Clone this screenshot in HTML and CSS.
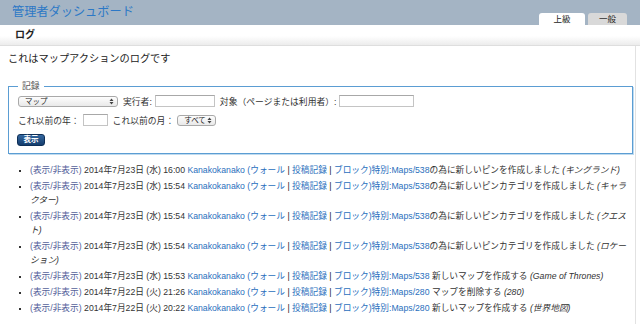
FILE: index.html
```html
<!DOCTYPE html>
<html lang="ja">
<head>
    <meta charset="UTF-8">
    <meta name="viewport" content="width=device-width, initial-scale=1.0">
    <title>管理者ダッシュボード</title>
    <link rel="stylesheet" href="styles.css">
</head>
<body>
    <header class="top-bar">
        <h1 class="site-title">管理者ダッシュボード</h1>
        <div class="tabs">
            <span class="tab active">上級</span>
            <span class="tab">一般</span>
        </div>
    </header>
    <nav class="sub-bar">ログ</nav>

    <main class="content">
        <p class="intro">これはマップアクションのログです</p>

        <fieldset class="log-form">
            <legend>記録</legend>
            <div class="form-row">
                <span class="select-wrap wide">
                    <select>
                        <option>マップ</option>
                    </select>
                    <svg class="arrows" width="5" height="7" viewBox="0 0 5 7"><path d="M0.5 3 L2.5 0.5 L4.5 3 Z M0.5 4 L2.5 6.5 L4.5 4 Z" fill="#444"/></svg>
                </span>
                <label>実行者:</label>
                <input type="text" class="performer">
                <label>対象（ページまたは利用者）:</label>
                <input type="text" class="target">
            </div>
            <div class="form-row">
                <label>これ以前の年：</label>
                <input type="text" class="year">
                <label class="month-label">これ以前の月：</label>
                <span class="select-wrap narrow">
                    <select>
                        <option>すべて</option>
                    </select>
                    <svg class="arrows" width="5" height="7" viewBox="0 0 5 7"><path d="M0.5 3 L2.5 0.5 L4.5 3 Z M0.5 4 L2.5 6.5 L4.5 4 Z" fill="#444"/></svg>
                </span>
            </div>
            <button class="show-btn">表示</button>
        </fieldset>

        <ul class="log-list">
            <li><a class="toggle">(表示/非表示)</a> 2014年7月23日 (水) 16:00 <a>Kanakokanako</a> <a>(ウォール</a> <span class="sep">|</span> <a>投稿記録</a> <span class="sep">|</span> <a>ブロック)</a><a>特別:Maps/538</a>の為に新しいピンを作成しました <em>(キングランド)</em></li>
            <li><a class="toggle">(表示/非表示)</a> 2014年7月23日 (水) 15:54 <a>Kanakokanako</a> <a>(ウォール</a> <span class="sep">|</span> <a>投稿記録</a> <span class="sep">|</span> <a>ブロック)</a><a>特別:Maps/538</a>の為に新しいピンカテゴリを作成しました <em>(キャラクター)</em></li>
            <li><a class="toggle">(表示/非表示)</a> 2014年7月23日 (水) 15:54 <a>Kanakokanako</a> <a>(ウォール</a> <span class="sep">|</span> <a>投稿記録</a> <span class="sep">|</span> <a>ブロック)</a><a>特別:Maps/538</a>の為に新しいピンカテゴリを作成しました <em>(クエスト)</em></li>
            <li><a class="toggle">(表示/非表示)</a> 2014年7月23日 (水) 15:54 <a>Kanakokanako</a> <a>(ウォール</a> <span class="sep">|</span> <a>投稿記録</a> <span class="sep">|</span> <a>ブロック)</a><a>特別:Maps/538</a>の為に新しいピンカテゴリを作成しました <em>(ロケーション)</em></li>
            <li><a class="toggle">(表示/非表示)</a> 2014年7月23日 (水) 15:53 <a>Kanakokanako</a> <a>(ウォール</a> <span class="sep">|</span> <a>投稿記録</a> <span class="sep">|</span> <a>ブロック)</a><a>特別:Maps/538</a> 新しいマップを作成する <em>(Game of Thrones)</em></li>
            <li><a class="toggle">(表示/非表示)</a> 2014年7月22日 (火) 21:26 <a>Kanakokanako</a> <a>(ウォール</a> <span class="sep">|</span> <a>投稿記録</a> <span class="sep">|</span> <a>ブロック)</a><a>特別:Maps/280</a> マップを削除する <em>(280)</em></li>
            <li><a class="toggle">(表示/非表示)</a> 2014年7月22日 (火) 20:22 <a>Kanakokanako</a> <a>(ウォール</a> <span class="sep">|</span> <a>投稿記録</a> <span class="sep">|</span> <a>ブロック)</a><a>特別:Maps/280</a> 新しいマップを作成する <em>(世界地図)</em></li>
        </ul>
    </main>
</body>
</html>
```

FILE: styles.css
```css
* {
    margin: 0;
    padding: 0;
    box-sizing: border-box;
    font-family: 'Liberation Sans', 'Noto Sans CJK JP', sans-serif;
}

body {
    background: white;
    color: #333;
}

.top-bar {
    height: 25px;
    background: #a4b4c4;
    display: flex;
    justify-content: space-between;
}

.site-title {
    font-size: 12.2px;
    font-weight: normal;
    color: #2c78c6;
    line-height: 24px;
    padding-left: 12px;
}

.tabs {
    align-self: flex-end;
    display: flex;
    gap: 3px;
    margin-right: 13px;
}

.tab {
    height: 12px;
    width: 39px;
    background: #d9d9d9;
    border-radius: 3px 3px 0 0;
    font-size: 8.5px;
    line-height: 12px;
    text-align: center;
    color: #222;
}

.tab.active {
    width: 46px;
    background: white;
}

.sub-bar {
    height: 21px;
    background: linear-gradient(#fff 55%, #ececec);
    border-bottom: 1px solid #dedede;
    padding-left: 15px;
    font-size: 10px;
    font-weight: bold;
    line-height: 20px;
    color: #222;
}

.content {
    width: 636px;
    border-right: 1px solid #e2e2e2;
    padding: 0 2px 10px 8px;
}

.intro {
    font-size: 10.2px;
    line-height: 14px;
    padding-top: 6px;
    color: #222;
}

.log-form {
    margin-top: 14px;
    border: 1px solid #5b9dd3;
    box-shadow: 1px 1px 0 #c0dbef;
    padding: 2px 9px 7px;
    width: 625px;
    font-size: 8.8px;
}

.log-form legend {
    padding: 0 4px;
    line-height: 12px;
    color: #555;
}

.form-row {
    display: flex;
    align-items: center;
    height: 14px;
    margin-bottom: 5px;
    color: #333;
}

.form-row label {
    margin: 0 3px 0 5px;
    white-space: nowrap;
}

.form-row label:first-child {
    margin-left: 0;
}

.select-wrap {
    position: relative;
    display: inline-block;
    height: 11px;
}

.select-wrap select {
    appearance: none;
    -webkit-appearance: none;
    width: 100%;
    height: 11px;
    border: 1px solid #a9a9a9;
    border-radius: 3px;
    background: linear-gradient(#fdfdfd, #e9e9e9);
    font-size: 7.5px;
    line-height: 9px;
    padding: 0 0 0 6px;
    color: #222;
}

.select-wrap .arrows {
    position: absolute;
    right: 4px;
    top: 2px;
}

.select-wrap.wide {
    width: 100px;
}

.select-wrap.narrow {
    width: 39px;
    margin-left: 0;
}

.form-row input {
    height: 12px;
    border: 1px solid #c4c4c4;
    border-top-color: #a8a8a8;
    background: white;
}

.performer {
    width: 60px;
}

.target {
    width: 75px;
}

.year {
    width: 25px;
}

.month-label {
    margin-left: 5px;
}

.show-btn {
    display: block;
    margin-top: 7px;
    width: 28px;
    height: 12px;
    border: 1px solid #0e2f57;
    border-radius: 3px;
    background: linear-gradient(#3568a0, #143d6d);
    color: white;
    font-size: 7.5px;
    font-weight: bold;
    line-height: 10px;
    margin-left: -1px;
}

.log-list {
    margin-top: 9px;
    padding-left: 22px;
    list-style: square;
    font-size: 8.7px;
    line-height: 14px;
    color: #333;
}

.log-list li {
    margin-bottom: 2px;
}

.log-list li::marker {
    color: #333;
    font-size: 7px;
}

.log-list a {
    color: #2a6fbd;
}

.log-list a.toggle {
    color: #55619a;
}

.log-list .sep {
    color: #222;
}

.log-list em {
    font-style: italic;
    color: #333;
}
```
